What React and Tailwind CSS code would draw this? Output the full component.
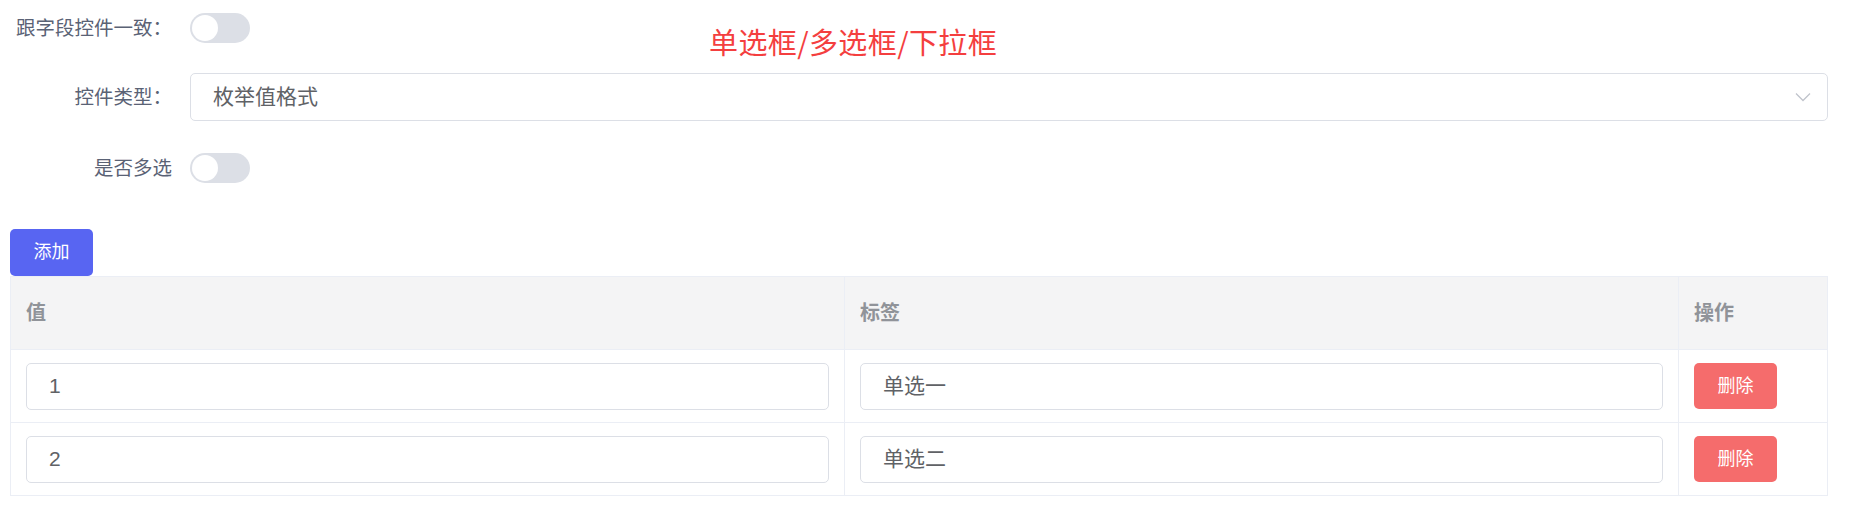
import React from "react";

const FONT = { fontFamily: "'Liberation Sans','Noto Sans CJK SC',sans-serif" };

function Switch() {
  return (
    <div className="ml-[18px] flex h-[30px] w-[60px] items-center rounded-full bg-[#dcdfe6] px-[2px]">
      <div className="h-[26px] w-[26px] rounded-full bg-white" />
    </div>
  );
}

function Label({ children }) {
  return (
    <div className="w-[172px] shrink-0 text-right text-[19.5px] leading-[24px] text-[#5a6275]">
      {children}
    </div>
  );
}

function Input({ value }) {
  return (
    <div className="flex h-[47px] w-full items-center rounded-[5px] border border-[#dcdfe6] bg-white pl-[22px] text-[21px] text-[#606266]">
      {value}
    </div>
  );
}

function DeleteBtn() {
  return (
    <div className="flex h-[46px] w-[83px] items-center justify-center rounded-[5px] bg-[#f56c6c] text-[18px] text-white">
      删除
    </div>
  );
}

export default function App() {
  const rows = [
    { v: "1", l: "单选一" },
    { v: "2", l: "单选二" },
  ];
  return (
    <div className="relative min-h-[515px] w-[1857px] bg-white pt-[4px]" style={FONT}>
      <div className="absolute left-[709px] top-[22px] text-[29px] leading-[38px] tracking-[0.4px] text-[#f43f3f]" style={{ fontFamily: "'Noto Sans CJK SC',sans-serif" }}>
        单选框/多选框/下拉框
      </div>

      <div className="flex h-[48px] items-center">
        <Label>跟字段控件一致：</Label>
        <Switch />
      </div>

      <div className="mt-[21px] flex h-[48px] items-center">
        <Label>控件类型：</Label>
        <div className="ml-[18px] flex h-[48px] w-[1638px] items-center justify-between rounded-[5px] border border-[#dcdfe6] pl-[22px] pr-[16px]">
          <span className="text-[21px] text-[#606266]">枚举值格式</span>
          <svg width="16" height="10" viewBox="0 0 16 10" fill="none">
            <path d="M1 1.5 L8 8.5 L15 1.5" stroke="#c0c4cc" strokeWidth="1.3" />
          </svg>
        </div>
      </div>

      <div className="mt-[23px] flex h-[48px] items-center">
        <Label>是否多选</Label>
        <Switch />
      </div>

      <div className="ml-[10px] mt-[37px] flex h-[47px] w-[83px] items-center justify-center rounded-[5px] bg-[#5865f2] text-[18px] text-white">
        添加
      </div>

      <div className="ml-[10px] w-[1818px] border border-[#ebeef5]">
        <div className="grid h-[72px] grid-cols-[834px_834px_1fr] bg-[#f4f4f5] text-[20px] font-bold text-[#909399]">
          <div className="flex items-center border-r border-[#ebeef5] pl-[15px]">值</div>
          <div className="flex items-center border-r border-[#ebeef5] pl-[15px]">标签</div>
          <div className="flex items-center pl-[15px]">操作</div>
        </div>
        {rows.map((r) => (
          <div key={r.v} className="grid h-[73px] grid-cols-[834px_834px_1fr] border-t border-[#ebeef5]">
            <div className="flex items-center border-r border-[#ebeef5] px-[15px]">
              <Input value={r.v} />
            </div>
            <div className="flex items-center border-r border-[#ebeef5] px-[15px]">
              <Input value={r.l} />
            </div>
            <div className="flex items-center pl-[15px]">
              <DeleteBtn />
            </div>
          </div>
        ))}
      </div>
    </div>
  );
}
